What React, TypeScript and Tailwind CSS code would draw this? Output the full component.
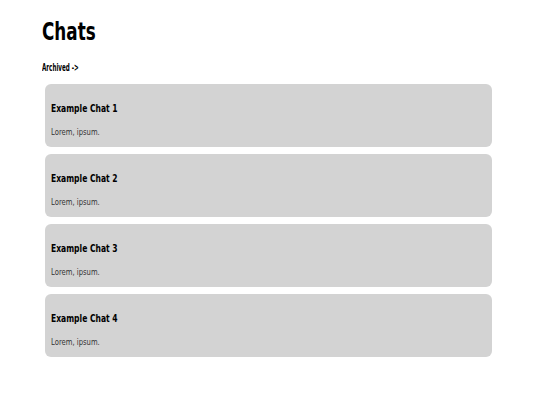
const chats = [
  { name: "Example Chat 1", preview: "Lorem, ipsum." },
  { name: "Example Chat 2", preview: "Lorem, ipsum." },
  { name: "Example Chat 3", preview: "Lorem, ipsum." },
  { name: "Example Chat 4", preview: "Lorem, ipsum." },
];

// the reference text is narrower than DejaVu Sans, so squeeze it a bit
const App = () => {
  return (
    <main
      className="w-[540px] h-[405px] bg-white text-black pl-[42px] pr-[48px] pt-[14px]"
      style={{ fontFamily: '"DejaVu Sans", sans-serif' }}
    >
      <h1 className="text-[24px] font-bold leading-[36px]">
        <span className="inline-block origin-left scale-x-[0.7]">Chats</span>
      </h1>
      <p className="text-[10px] font-bold leading-[12px] mt-[12px]">
        <span className="inline-block origin-left scale-x-[0.56]">Archived -&gt;</span>
      </p>
      <section className="flex flex-col gap-[7px] mt-[10px] ml-[3px]">
        {chats.map((chat) => (
          <div
            key={chat.name}
            className="h-[63px] rounded-[6px] bg-[#d3d3d3] px-[6px] pt-[17px]"
          >
            <h2 className="text-[11px] font-bold leading-[16px]">
              <span className="inline-block origin-left scale-x-[0.69]">{chat.name}</span>
            </h2>
            <p className="text-[9px] leading-[12px] text-[#333] mt-[9px]">
              <span className="inline-block origin-left scale-x-[0.76]">{chat.preview}</span>
            </p>
          </div>
        ))}
      </section>
    </main>
  );
};

export default App;
